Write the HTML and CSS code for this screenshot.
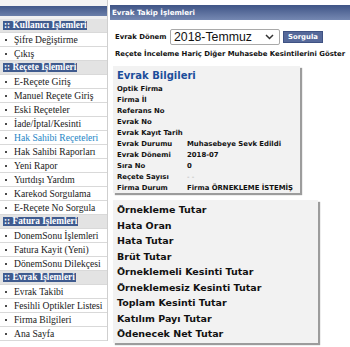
FILE: index.html
```html
<!DOCTYPE html>
<html lang="tr">
<head>
<meta charset="utf-8">
<link rel="stylesheet" href="styles.css">
</head>
<body>
<div class="page">
  <nav class="sidebar">
    <div class="side-top"></div>
    <div class="side-bar"></div>
    <ul class="menu">
      <li class="menu-head"><span>:: Kullanıcı İşlemleri</span></li>
      <li class="item"><i class="dot"></i>Şifre Değiştirme</li>
      <li class="item"><i class="dot"></i>Çıkış</li>
      <li class="menu-head"><span>:: Reçete İşlemleri</span></li>
      <li class="item"><i class="dot"></i>E-Reçete Giriş</li>
      <li class="item"><i class="dot"></i>Manuel Reçete Giriş</li>
      <li class="item"><i class="dot"></i>Eski Reçeteler</li>
      <li class="item"><i class="dot"></i>İade/İptal/Kesinti</li>
      <li class="item active"><i class="dot"></i>Hak Sahibi Reçeteleri</li>
      <li class="item"><i class="dot"></i>Hak Sahibi Raporları</li>
      <li class="item"><i class="dot"></i>Yeni Rapor</li>
      <li class="item"><i class="dot"></i>Yurtdışı Yardım</li>
      <li class="item"><i class="dot"></i>Karekod Sorgulama</li>
      <li class="item"><i class="dot"></i>E-Reçete No Sorgula</li>
      <li class="menu-head"><span>:: Fatura İşlemleri</span></li>
      <li class="item"><i class="dot"></i>DonemSonu İşlemleri</li>
      <li class="item"><i class="dot"></i>Fatura Kayit (Yeni)</li>
      <li class="item"><i class="dot"></i>DönemSonu Dilekçesi</li>
      <li class="menu-head"><span>:: Evrak İşlemleri</span></li>
      <li class="item"><i class="dot"></i>Evrak Takibi</li>
      <li class="item"><i class="dot"></i>Fesihli Optikler Listesi</li>
      <li class="item"><i class="dot"></i>Firma Bilgileri</li>
      <li class="item"><i class="dot"></i>Ana Sayfa</li>
    </ul>
  </nav>
  <main class="main">
    <div class="main-top"></div>
    <div class="title-bar">Evrak Takip İşlemleri</div>
    <div class="form-row">
      <span class="label">Evrak Dönem</span>
      <div class="select">
        <span class="select-text">2018-Temmuz</span>
        <svg class="chev" width="9" height="6" viewBox="0 0 9 6"><path d="M1 1 L4.5 4.5 L8 1" fill="none" stroke="#333" stroke-width="1.5"/></svg>
      </div>
      <span class="btn">Sorgula</span>
    </div>
    <div class="note">Reçete İnceleme Hariç Diğer Muhasebe Kesintilerini Göster</div>
    <section class="box info">
      <h2 class="box-title">Evrak Bilgileri</h2>
      <div class="row"><span class="k">Optik Firma</span><span class="v"></span></div>
      <div class="row"><span class="k">Firma İl</span><span class="v"></span></div>
      <div class="row"><span class="k">Referans No</span><span class="v"></span></div>
      <div class="row"><span class="k">Evrak No</span><span class="v"></span></div>
      <div class="row"><span class="k">Evrak Kayıt Tarih</span><span class="v"></span></div>
      <div class="row"><span class="k">Evrak Durumu</span><span class="v">Muhasebeye Sevk Edildi</span></div>
      <div class="row"><span class="k">Evrak Dönemi</span><span class="v">2018-07</span></div>
      <div class="row"><span class="k">Sıra No</span><span class="v">0</span></div>
      <div class="row"><span class="k">Reçete Sayısı</span><span class="v faint">- -</span></div>
      <div class="row"><span class="k">Firma Durum</span><span class="v">Firma ÖRNEKLEME İSTEMİŞ</span></div>
    </section>
    <section class="box sums">
      <div class="sum">Örnekleme Tutar</div>
      <div class="sum">Hata Oran</div>
      <div class="sum">Hata Tutar</div>
      <div class="sum">Brüt Tutar</div>
      <div class="sum">Örneklemeli Kesinti Tutar</div>
      <div class="sum">Örneklemesiz Kesinti Tutar</div>
      <div class="sum">Toplam Kesinti Tutar</div>
      <div class="sum">Katılım Payı Tutar</div>
      <div class="sum">Ödenecek Net Tutar</div>
    </section>
  </main>
</div>
</body>
</html>
```
FILE: styles.css
```css
* { box-sizing: border-box; }
html, body { margin: 0; padding: 0; }
body {
  width: 350px;
  height: 347px;
  overflow: hidden;
  background: #fff;
  font-family: "DejaVu Sans", Verdana, sans-serif;
}
.page { display: flex; align-items: flex-start; }

.sidebar {
  width: 108px;
  flex: none;
  background: #f1f1f1;
  border-right: 1px solid #cfcfcf;
}
.side-top { height: 6px; background: #f4f4f4; }
.side-bar {
  height: 10px;
  background: linear-gradient(#43598a, #6b7fa9);
}
.menu { list-style: none; margin: 3px 0 0; padding: 0; }
.menu li {
  height: 14px;
  display: flex;
  align-items: center;
  border-bottom: 1px solid #d9d9d9;
  font-family: "Liberation Serif", "Times New Roman", serif;
  white-space: nowrap;
  overflow: hidden;
}
.menu-head { background: #e3e3e3; padding-left: 3px; }
.menu-head span {
  background: #3f5b8f;
  color: #fff;
  font-weight: bold;
  font-size: 9.3px;
  line-height: 9px;
  height: 9px;
  padding: 0 1px;
  max-width: 84px;
  overflow: hidden;
  display: inline-block;
}
.item {
  background: #fff;
  padding-left: 5px;
  font-size: 9.6px;
  color: #1a1a1a;
}
.item.active { color: #1e86c6; }
.dot {
  width: 2px;
  height: 2px;
  background: #4a4a4a;
  margin-right: 7px;
  flex: none;
}

.main { flex: 1; margin-left: 2px; }
.main-top { height: 5px; }
.title-bar {
  height: 15px;
  background: linear-gradient(#3f5486, #7588b2);
  color: #fff;
  font-weight: bold;
  font-size: 7.1px;
  line-height: 16px;
  padding-left: 2px;
  white-space: nowrap;
}
.form-row {
  display: flex;
  align-items: center;
  margin-top: 9px;
  padding-left: 5px;
  height: 16px;
}
.label { font-weight: bold; font-size: 6.9px; color: #111; width: 55px; white-space: nowrap; }
.select {
  width: 110px;
  height: 16px;
  border: 1px solid #a9a9a9;
  border-radius: 2px;
  background: #fff;
  display: flex;
  align-items: center;
  padding: 0 5px 0 3px;
}
.select-text {
  flex: 1;
  font-family: "Liberation Sans", Arial, sans-serif;
  font-size: 12.3px;
  color: #111;
}
.chev { flex: none; }
.btn {
  margin-left: 3px;
  width: 40px;
  height: 12px;
  background: #56699a;
  border: 1px solid #3f5283;
  color: #fff;
  font-weight: bold;
  font-size: 6.9px;
  line-height: 10px;
  text-align: center;
}
.note {
  margin-top: 4px;
  padding-left: 5px;
  font-weight: bold;
  font-size: 6.9px;
  line-height: 10px;
  color: #111;
  white-space: nowrap;
}
.box {
  margin-left: 3px;
  background: #f2f2f2;
  box-shadow: 2px 2px 1px #9c9c9c;
}
.info {
  width: 187px;
  margin-top: 7px;
  padding: 3px 4px 0;
  height: 127px;
}
.box-title {
  margin: 0;
  font-size: 10px;
  line-height: 14px;
  color: #1c4e9b;
  font-weight: bold;
}
.row {
  display: flex;
  height: 11px;
  align-items: center;
  font-size: 6.9px;
  font-weight: bold;
  color: #111;
  white-space: nowrap;
}
.k { width: 70px; flex: none; }
.v.faint { color: #aaa; font-weight: normal; }
.sums {
  width: 205px;
  margin-top: 7px;
  padding: 2px 4px 0;
  height: 143px;
}
.sum {
  height: 15.5px;
  line-height: 15.5px;
  font-size: 9.5px;
  font-weight: bold;
  color: #111;
  white-space: nowrap;
}
```
